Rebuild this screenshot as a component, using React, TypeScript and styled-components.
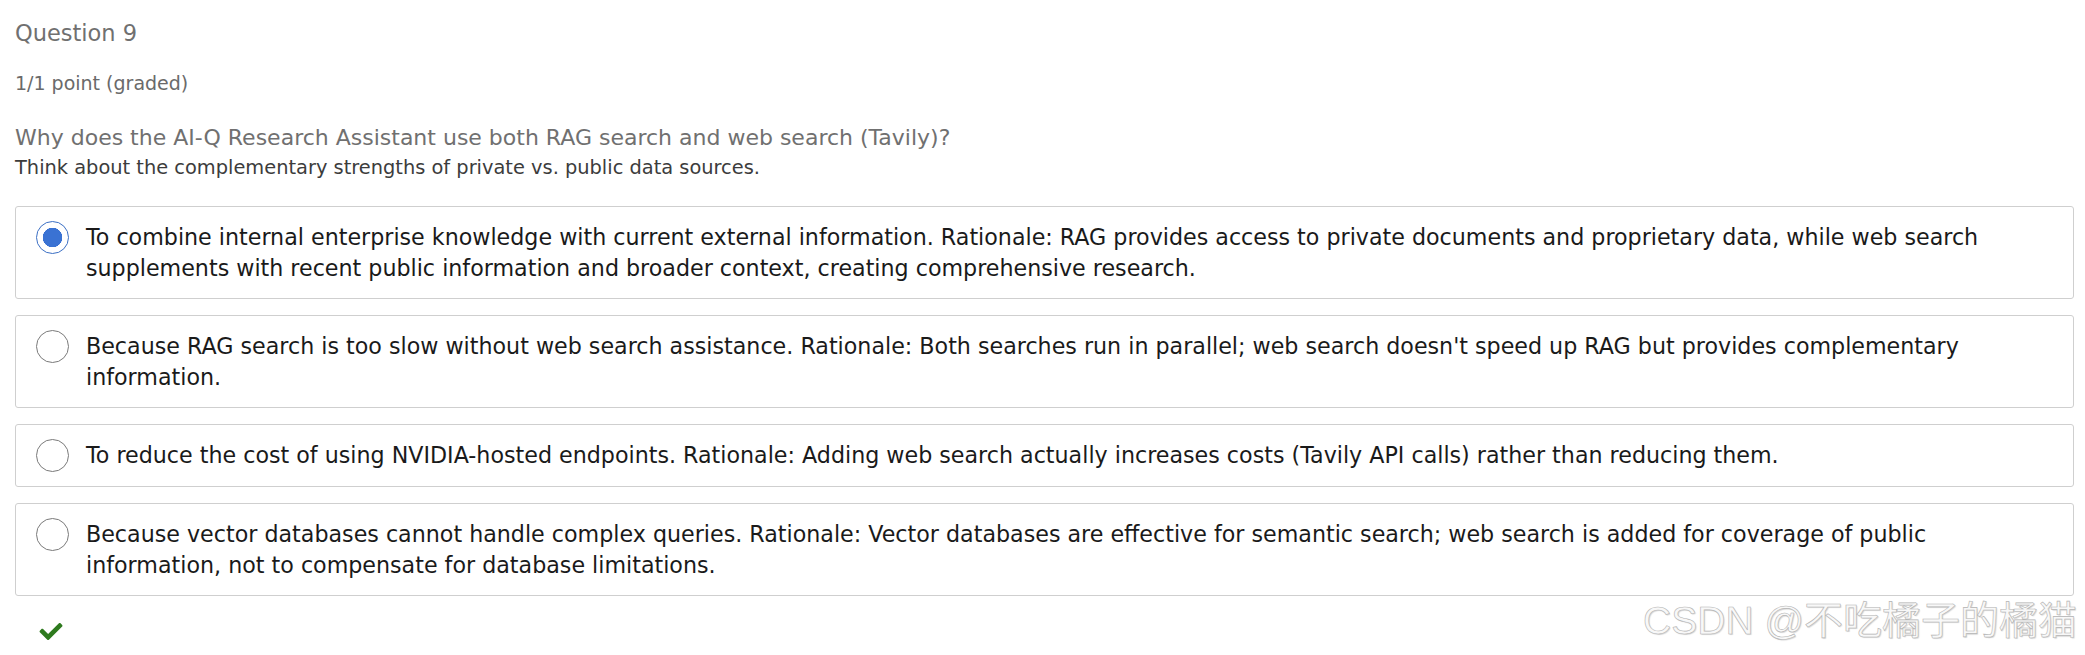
import styled, { createGlobalStyle } from "styled-components";
import { FaCheck } from "react-icons/fa";

const GlobalStyle = createGlobalStyle`
    body {
        margin: 0;
        background: #fff;
        font-family: "DejaVu Sans", "Noto Sans", sans-serif;
    }
`;

const options = [
    "To combine internal enterprise knowledge with current external information. Rationale: RAG provides access to private documents and proprietary data, while web search supplements with recent public information and broader context, creating comprehensive research.",
    "Because RAG search is too slow without web search assistance. Rationale: Both searches run in parallel; web search doesn't speed up RAG but provides complementary information.",
    "To reduce the cost of using NVIDIA-hosted endpoints. Rationale: Adding web search actually increases costs (Tavily API calls) rather than reducing them.",
    "Because vector databases cannot handle complex queries. Rationale: Vector databases are effective for semantic search; web search is added for coverage of public information, not to compensate for database limitations.",
];

const App = () => {
    const selected = 0;

    return (
        <>
            <GlobalStyle />
            <Page>
                <Title>Question 9</Title>
                <Points>1/1 point (graded)</Points>
                <Prompt>Why does the AI-Q Research Assistant use both RAG search and web search (Tavily)?</Prompt>
                <Hint>Think about the complementary strengths of private vs. public data sources.</Hint>

                <OptionList>
                    {options.map((text, i) => (
                        <Option key={i}>
                            <Radio checked={i === selected} />
                            <OptionText>{text}</OptionText>
                        </Option>
                    ))}
                </OptionList>

                <Status>
                    <FaCheck />
                </Status>

                <Watermark>CSDN @不吃橘子的橘猫</Watermark>
            </Page>
        </>
    );
};

const Page = styled.div`
    position: relative;
    width: 2085px;
    height: 655px;
    box-sizing: border-box;
    padding: 18px 11px 0 15px;
    display: flex;
    flex-direction: column;
    overflow: hidden;
`;

const Title = styled.div`
    font-size: 22.5px;
    line-height: 30px;
    color: #707070;
`;

const Points = styled.div`
    margin-top: 22px;
    font-size: 19px;
    line-height: 26px;
    color: #6a6a6a;
`;

const Prompt = styled.div`
    margin-top: 27px;
    font-size: 22px;
    line-height: 30px;
    color: #707070;
`;

const Hint = styled.div`
    margin-top: 2px;
    font-size: 19.4px;
    line-height: 26px;
    color: #3c3c3c;
`;

const OptionList = styled.div`
    margin-top: 25px;
    display: flex;
    flex-direction: column;
    gap: 16px;
`;

const Option = styled.label`
    display: flex;
    align-items: flex-start;
    gap: 17px;
    padding: 15px 20px 14px;
    border: 1px solid #cfcfcf;
    border-radius: 3px;
    cursor: pointer;
`;

const Radio = styled.span<{ checked: boolean }>`
    flex: none;
    box-sizing: border-box;
    width: 33px;
    height: 33px;
    margin-top: -1px;
    border-radius: 50%;
    border: 1.5px solid ${p => (p.checked ? "#3b6fc4" : "#7a7a7a")};
    background: ${p => (p.checked ? "radial-gradient(circle, #3a72d3 0 9.5px, #fff 10px)" : "#fff")};
`;

const OptionText = styled.div`
    font-size: 22.2px;
    line-height: 31px;
    color: #1a1a1a;
`;

const Status = styled.div`
    margin-top: 24px;
    padding-left: 22px;
    color: #2e7a1e;
    line-height: 0;

    & svg {
        width: 28px;
        height: 23px;
    }
`;

const Watermark = styled.div`
    position: absolute;
    right: 8px;
    bottom: 12px;
    font-family: "Liberation Sans", "Noto Sans CJK SC", sans-serif;
    font-size: 39px;
    line-height: 44px;
    color: #f8f8f8;
    -webkit-text-stroke: 0.6px #b4b4b4;
    text-shadow: 1px 1px 1px #d8d8d8;
    pointer-events: none;
`;

export default App;
